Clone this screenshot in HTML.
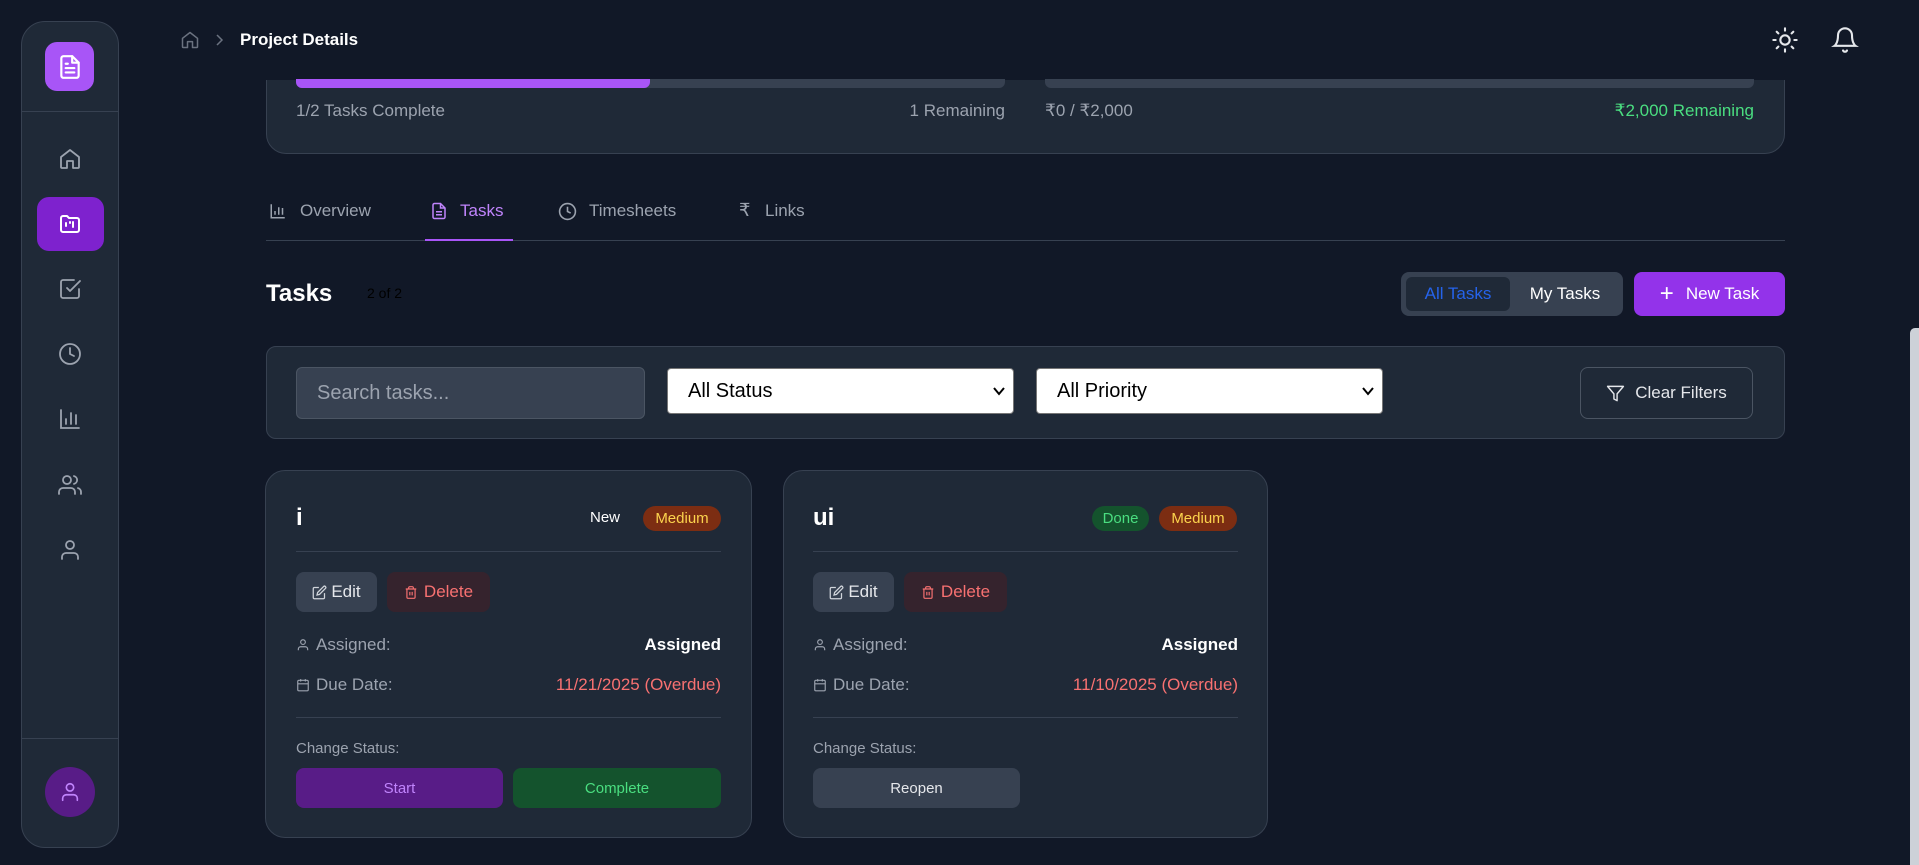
<!DOCTYPE html>
<html><head><meta charset="utf-8"><style>
*{box-sizing:border-box;margin:0;padding:0}
body{width:1919px;height:865px;overflow:hidden;background:#111827;font-family:"Liberation Sans",sans-serif;color:#e5e7eb;position:relative}
.abs{position:absolute}
svg{display:block}
.side{left:21px;top:21px;width:98px;height:827px;background:#1f2937;border:1px solid #374151;border-radius:24px}
.ico{position:absolute;left:58px;width:24px;height:24px}
.card{background:#1f2937;border:1px solid #374151}
.sel{background:#fff;border-radius:4px;color:#000;font-size:20px;padding-left:20px;display:flex;align-items:center;border:1px solid #767676}
.btn{position:absolute;border-radius:8px;display:flex;align-items:center;justify-content:center;font-size:15px}
.lbl{color:#9ca3af;font-size:17px}
</style></head><body>
<!-- top card -->
<div class="abs card" style="left:266px;top:40px;width:1519px;height:114px;border-radius:20px"></div>
<div class="abs" style="left:120px;top:0;width:1790px;height:80px;background:#111827"></div>
<div class="abs" style="left:296px;top:79px;width:709px;height:9px;background:#374151;border-radius:0 0 6px 6px"></div>
<div class="abs" style="left:296px;top:79px;width:354px;height:9px;background:#a855f7;border-radius:0 0 6px 6px"></div>
<div class="abs" style="left:1045px;top:79px;width:709px;height:9px;background:#374151;border-radius:0 0 6px 6px"></div>
<div class="abs lbl" style="left:296px;top:101px">1/2 Tasks Complete</div>
<div class="abs lbl" style="left:805px;width:200px;text-align:right;top:101px">1 Remaining</div>
<div class="abs lbl" style="left:1045px;top:101px">₹0 / ₹2,000</div>
<div class="abs" style="left:1500px;width:254px;text-align:right;top:101px;color:#4ade80;font-size:17px">₹2,000 Remaining</div>

<div class="abs side"></div>
<div class="abs" style="left:45px;top:42px;width:49px;height:49px;background:#a855f7;border-radius:12px;display:flex;align-items:center;justify-content:center">
<svg width="26" height="26" viewBox="0 0 24 24" fill="none" stroke="#fff" stroke-width="2" stroke-linecap="round" stroke-linejoin="round"><path d="M14 2H6a2 2 0 0 0-2 2v16a2 2 0 0 0 2 2h12a2 2 0 0 0 2-2V8z"/><path d="M14 2v6h6M16 13H8M16 17H8M10 9H8"/></svg></div>
<div class="abs" style="left:22px;top:111px;width:96px;height:1px;background:#374151"></div>
<div class="abs" style="left:22px;top:738px;width:96px;height:1px;background:#374151"></div>
<div class="abs" style="left:37px;top:197px;width:67px;height:54px;background:#7e22ce;border-radius:12px"></div>
<svg class="ico" style="top:147px" viewBox="0 0 24 24" fill="none" stroke="#9ca3af" stroke-width="1.8" stroke-linejoin="round"><path d="M3 10l9-7 9 7v10a1 1 0 0 1-1 1h-5v-7H9v7H4a1 1 0 0 1-1-1z"/></svg>
<svg class="ico" style="top:212px" viewBox="0 0 24 24" fill="none" stroke="#fff" stroke-width="2" stroke-linecap="round" stroke-linejoin="round"><path d="M3 6a2 2 0 0 1 2-2h4l2 2h8a2 2 0 0 1 2 2v10a2 2 0 0 1-2 2H5a2 2 0 0 1-2-2z"/><path d="M8 11v3M12 10v1M15 10v5"/></svg>
<svg class="ico" style="top:277px" viewBox="0 0 24 24" fill="none" stroke="#9ca3af" stroke-width="1.8" stroke-linecap="round" stroke-linejoin="round"><path d="M9 11l3 3L22 4"/><path d="M21 12v7a2 2 0 0 1-2 2H5a2 2 0 0 1-2-2V5a2 2 0 0 1 2-2h11"/></svg>
<svg class="ico" style="top:342px" viewBox="0 0 24 24" fill="none" stroke="#9ca3af" stroke-width="1.8" stroke-linecap="round"><circle cx="12" cy="12" r="10"/><path d="M12 6v6l4 2"/></svg>
<svg class="ico" style="top:407px" viewBox="0 0 24 24" fill="none" stroke="#9ca3af" stroke-width="1.8" stroke-linecap="round"><path d="M3 3v18h18M8 17v-5M13 17V6M18 17v-9"/></svg>
<svg class="ico" style="top:473px" viewBox="0 0 24 24" fill="none" stroke="#9ca3af" stroke-width="1.8" stroke-linecap="round"><circle cx="9" cy="7" r="4"/><path d="M17 21v-2a4 4 0 0 0-4-4H5a4 4 0 0 0-4 4v2M16 3.1a4 4 0 0 1 0 7.8M23 21v-2a4 4 0 0 0-3-3.9"/></svg>
<svg class="ico" style="top:538px" viewBox="0 0 24 24" fill="none" stroke="#9ca3af" stroke-width="1.8" stroke-linecap="round"><circle cx="12" cy="7" r="4"/><path d="M20 21v-2a4 4 0 0 0-4-4H8a4 4 0 0 0-4 4v2"/></svg>
<div class="abs" style="left:45px;top:767px;width:50px;height:50px;border-radius:50%;background:#581c87;display:flex;align-items:center;justify-content:center"><svg width="22" height="22" viewBox="0 0 24 24" fill="none" stroke="#c084fc" stroke-width="1.8" stroke-linecap="round"><circle cx="12" cy="7" r="4"/><path d="M20 21v-2a4 4 0 0 0-4-4H8a4 4 0 0 0-4 4v2"/></svg></div>

<!-- header -->
<svg class="abs" style="left:180px;top:30px" width="20" height="20" viewBox="0 0 24 24" fill="none" stroke="#6b7280" stroke-width="1.8" stroke-linejoin="round"><path d="M3 10l9-7 9 7v10a1 1 0 0 1-1 1h-5v-7H9v7H4a1 1 0 0 1-1-1z"/></svg>
<svg class="abs" style="left:214px;top:33px" width="12" height="14" viewBox="0 0 12 14" fill="none" stroke="#6b7280" stroke-width="1.5"><path d="M3 2l5 5-5 5"/></svg>
<div class="abs" style="left:240px;top:30px;font-size:17px;font-weight:bold;color:#fff">Project Details</div>
<svg class="abs" style="left:1771px;top:26px" width="28" height="28" viewBox="0 0 24 24" fill="none" stroke="#e5e7eb" stroke-width="1.8" stroke-linecap="round"><circle cx="12" cy="12" r="4"/><path d="M12 2v2M12 20v2M4.9 4.9l1.4 1.4M17.7 17.7l1.4 1.4M2 12h2M20 12h2M6.3 17.7l-1.4 1.4M19.1 4.9l-1.4 1.4"/></svg>
<svg class="abs" style="left:1831px;top:25px" width="28" height="30" viewBox="0 0 24 24" fill="none" stroke="#e5e7eb" stroke-width="1.8" stroke-linecap="round"><path d="M6 8a6 6 0 0 1 12 0c0 7 3 9 3 9H3s3-2 3-9M10.3 21a1.9 1.9 0 0 0 3.4 0"/></svg>

<!-- scrollbar -->
<div class="abs" style="left:1910px;top:328px;width:9px;height:537px;background:#cdd1d8;border-radius:5px 0 0 0"></div>

<!-- tabs -->
<div class="abs" style="left:266px;top:240px;width:1519px;height:1px;background:#374151"></div>
<div class="abs" style="left:425px;top:239px;width:88px;height:2px;background:#a855f7"></div>
<svg class="abs" style="left:269px;top:202px" width="18" height="18" viewBox="0 0 24 24" fill="none" stroke="#9ca3af" stroke-width="2"><path d="M3 3v18h18M8 17v-5M13 17V7M18 17v-9"/></svg>
<div class="abs" style="left:300px;top:201px;font-size:17px;color:#9ca3af">Overview</div>
<svg class="abs" style="left:430px;top:202px" width="18" height="18" viewBox="0 0 24 24" fill="none" stroke="#c084fc" stroke-width="2"><path d="M14 2H6a2 2 0 0 0-2 2v16a2 2 0 0 0 2 2h12a2 2 0 0 0 2-2V8z"/><path d="M14 2v6h6M16 13H8M16 17H8"/></svg>
<div class="abs" style="left:460px;top:201px;font-size:17px;color:#c084fc">Tasks</div>
<svg class="abs" style="left:558px;top:202px" width="19" height="19" viewBox="0 0 24 24" fill="none" stroke="#9ca3af" stroke-width="2"><circle cx="12" cy="12" r="10"/><path d="M12 6v6l4 2"/></svg>
<div class="abs" style="left:589px;top:201px;font-size:17px;color:#9ca3af">Timesheets</div>
<div class="abs" style="left:739px;top:200px;font-size:18px;color:#9ca3af">₹</div>
<div class="abs" style="left:765px;top:201px;font-size:17px;color:#9ca3af">Links</div>

<!-- tasks head -->
<div class="abs" style="left:266px;top:280px;font-size:24px;font-weight:bold;color:#fff">Tasks</div>
<div class="abs" style="left:367px;top:285px;font-size:14px;color:#000">2 of 2</div>
<div class="abs" style="left:1401px;top:272px;width:222px;height:44px;background:#374151;border-radius:8px"></div>
<div class="abs" style="left:1406px;top:277px;width:104px;height:34px;background:#1f2937;border-radius:6px;display:flex;align-items:center;justify-content:center;color:#2563eb;font-size:17px">All Tasks</div>
<div class="abs" style="left:1512px;top:277px;width:106px;height:34px;display:flex;align-items:center;justify-content:center;color:#fff;font-size:17px">My Tasks</div>
<div class="abs" style="left:1634px;top:272px;width:151px;height:44px;background:#9333ea;border-radius:8px;display:flex;align-items:center;justify-content:center;color:#fff;font-size:17px;gap:12px"><span style="font-size:24px;font-weight:300;line-height:1">+</span>New Task</div>

<!-- filter -->
<div class="abs card" style="left:266px;top:346px;width:1519px;height:93px;border-radius:10px"></div>
<div class="abs" style="left:296px;top:367px;width:349px;height:52px;background:#374151;border:1px solid #4b5563;border-radius:6px;color:#9ca3af;font-size:20px;padding-left:20px;display:flex;align-items:center">Search tasks...</div>
<div class="abs sel" style="left:667px;top:368px;width:347px;height:46px">All Status<svg style="position:absolute;right:8px;top:18px" width="12" height="9" viewBox="0 0 12 9"><path d="M1 1l5 6 5-6" fill="none" stroke="#000" stroke-width="2"/></svg></div>
<div class="abs sel" style="left:1036px;top:368px;width:347px;height:46px">All Priority<svg style="position:absolute;right:8px;top:18px" width="12" height="9" viewBox="0 0 12 9"><path d="M1 1l5 6 5-6" fill="none" stroke="#000" stroke-width="2"/></svg></div>
<div class="abs" style="left:1580px;top:367px;width:173px;height:52px;border:1.5px solid #4b5563;border-radius:8px;display:flex;align-items:center;justify-content:center;gap:10px;color:#e5e7eb;font-size:17px"><svg width="19" height="19" viewBox="0 0 24 24" fill="none" stroke="#e5e7eb" stroke-width="1.8" stroke-linejoin="round"><path d="M22 3H2l8 9.5V19l4 2v-8.5z"/></svg>Clear Filters</div>

<!-- card 1 -->
<div class="abs card" style="left:265px;top:470px;width:487px;height:368px;border-radius:20px"></div>
<div class="abs" style="left:296px;top:504px;font-size:24px;font-weight:bold;color:#fff">i</div>
<div class="abs" style="left:590px;top:509px;font-size:15px;color:#fff">New</div>
<div class="abs" style="left:643px;top:506px;width:78px;height:25px;background:#7c2d12;border-radius:13px;color:#fcd34d;font-size:15px;display:flex;align-items:center;justify-content:center">Medium</div>
<div class="abs" style="left:296px;top:551px;width:425px;height:1px;background:#374151"></div>
<div class="btn" style="left:296px;top:572px;width:81px;height:40px;background:#374151;color:#e5e7eb;font-size:17px;gap:4px"><svg width="15" height="15" viewBox="0 0 24 24" fill="none" stroke="#d1d5db" stroke-width="2"><path d="M11 4H4a2 2 0 0 0-2 2v14a2 2 0 0 0 2 2h14a2 2 0 0 0 2-2v-7"/><path d="M18.5 2.5a2.1 2.1 0 0 1 3 3L12 15l-4 1 1-4z"/></svg>Edit</div>
<div class="btn" style="left:387px;top:572px;width:103px;height:40px;background:#35232d;color:#f87171;font-size:17px;gap:6px"><svg width="14" height="15" viewBox="0 0 24 24" fill="none" stroke="#f87171" stroke-width="2"><path d="M3 6h18M19 6v14a2 2 0 0 1-2 2H7a2 2 0 0 1-2-2V6M8 6V4a2 2 0 0 1 2-2h4a2 2 0 0 1 2 2v2M10 11v6M14 11v6"/></svg>Delete</div>
<svg class="abs" style="left:296px;top:638px" width="14" height="14" viewBox="0 0 24 24" fill="none" stroke="#9ca3af" stroke-width="2"><circle cx="12" cy="7" r="4"/><path d="M20 21v-2a4 4 0 0 0-4-4H8a4 4 0 0 0-4 4v2"/></svg>
<div class="abs lbl" style="left:316px;top:635px">Assigned:</div>
<div class="abs" style="left:560px;width:161px;text-align:right;top:635px;color:#fff;font-weight:bold;font-size:17px">Assigned</div>
<svg class="abs" style="left:296px;top:678px" width="14" height="14" viewBox="0 0 24 24" fill="none" stroke="#9ca3af" stroke-width="2"><rect x="3" y="4" width="18" height="18" rx="2"/><path d="M16 2v4M8 2v4M3 10h18"/></svg>
<div class="abs lbl" style="left:316px;top:675px">Due Date:</div>
<div class="abs" style="left:500px;width:221px;text-align:right;top:675px;color:#f87171;font-size:17px">11/21/2025 (Overdue)</div>
<div class="abs" style="left:296px;top:717px;width:425px;height:1px;background:#374151"></div>
<div class="abs" style="left:296px;top:740px;font-size:15px;color:#9ca3af">Change Status:</div>
<div class="btn" style="left:296px;top:768px;width:207px;height:40px;background:#581c87;color:#c084fc">Start</div>
<div class="btn" style="left:513px;top:768px;width:208px;height:40px;background:#14532d;color:#4ade80">Complete</div>

<!-- card 2 -->
<div class="abs card" style="left:783px;top:470px;width:485px;height:368px;border-radius:20px"></div>
<div class="abs" style="left:813px;top:504px;font-size:24px;font-weight:bold;color:#fff">ui</div>
<div class="abs" style="left:1092px;top:506px;width:57px;height:25px;background:#14532d;border-radius:13px;color:#4ade80;font-size:15px;display:flex;align-items:center;justify-content:center">Done</div>
<div class="abs" style="left:1159px;top:506px;width:78px;height:25px;background:#7c2d12;border-radius:13px;color:#fcd34d;font-size:15px;display:flex;align-items:center;justify-content:center">Medium</div>
<div class="abs" style="left:813px;top:551px;width:425px;height:1px;background:#374151"></div>
<div class="btn" style="left:813px;top:572px;width:81px;height:40px;background:#374151;color:#e5e7eb;font-size:17px;gap:4px"><svg width="15" height="15" viewBox="0 0 24 24" fill="none" stroke="#d1d5db" stroke-width="2"><path d="M11 4H4a2 2 0 0 0-2 2v14a2 2 0 0 0 2 2h14a2 2 0 0 0 2-2v-7"/><path d="M18.5 2.5a2.1 2.1 0 0 1 3 3L12 15l-4 1 1-4z"/></svg>Edit</div>
<div class="btn" style="left:904px;top:572px;width:103px;height:40px;background:#35232d;color:#f87171;font-size:17px;gap:6px"><svg width="14" height="15" viewBox="0 0 24 24" fill="none" stroke="#f87171" stroke-width="2"><path d="M3 6h18M19 6v14a2 2 0 0 1-2 2H7a2 2 0 0 1-2-2V6M8 6V4a2 2 0 0 1 2-2h4a2 2 0 0 1 2 2v2M10 11v6M14 11v6"/></svg>Delete</div>
<svg class="abs" style="left:813px;top:638px" width="14" height="14" viewBox="0 0 24 24" fill="none" stroke="#9ca3af" stroke-width="2"><circle cx="12" cy="7" r="4"/><path d="M20 21v-2a4 4 0 0 0-4-4H8a4 4 0 0 0-4 4v2"/></svg>
<div class="abs lbl" style="left:833px;top:635px">Assigned:</div>
<div class="abs" style="left:1077px;width:161px;text-align:right;top:635px;color:#fff;font-weight:bold;font-size:17px">Assigned</div>
<svg class="abs" style="left:813px;top:678px" width="14" height="14" viewBox="0 0 24 24" fill="none" stroke="#9ca3af" stroke-width="2"><rect x="3" y="4" width="18" height="18" rx="2"/><path d="M16 2v4M8 2v4M3 10h18"/></svg>
<div class="abs lbl" style="left:833px;top:675px">Due Date:</div>
<div class="abs" style="left:1017px;width:221px;text-align:right;top:675px;color:#f87171;font-size:17px">11/10/2025 (Overdue)</div>
<div class="abs" style="left:813px;top:717px;width:425px;height:1px;background:#374151"></div>
<div class="abs" style="left:813px;top:740px;font-size:15px;color:#9ca3af">Change Status:</div>
<div class="btn" style="left:813px;top:768px;width:207px;height:40px;background:#374151;color:#e5e7eb">Reopen</div>
</body></html>
